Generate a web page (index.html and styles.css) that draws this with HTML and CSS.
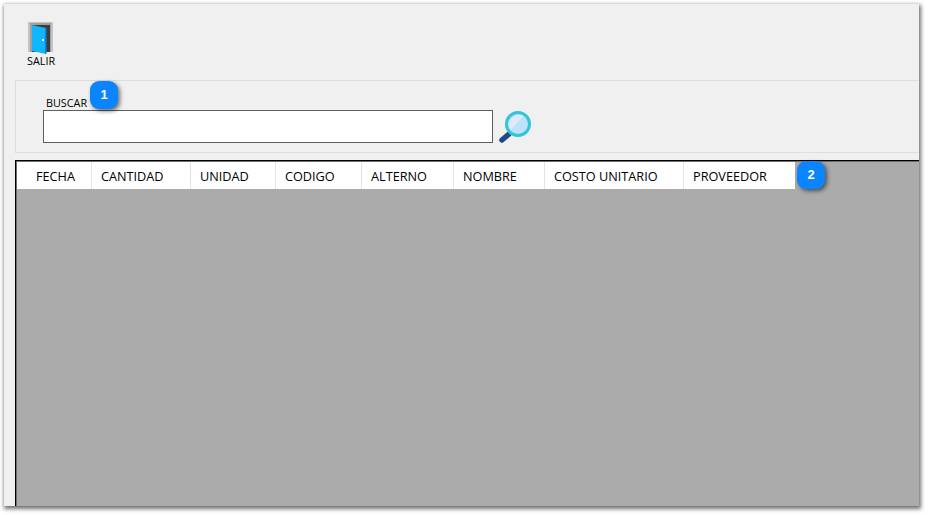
FILE: index.html
```html
<!DOCTYPE html>
<html lang="es">
<head>
<meta charset="utf-8">
<title>Buscar</title>
<link rel="stylesheet" href="styles.css">
</head>
<body>
<div class="window">
  <div class="toolbar">
    <div class="tool">
      <svg class="door" width="25" height="32" viewBox="0 0 25 32">
        <rect x="0" y="0" width="25" height="30" fill="#c4c4c4"/>
        <rect x="2" y="1" width="21" height="29" fill="#a0a0a0"/>
        <rect x="4" y="3" width="18" height="27" fill="#3f3b3b"/>
        <path d="M4 3 L18 6 V32 L4 29 Z" fill="#12b4fb"/>
        <path d="M17 5.800 L18.500 6.200 V32 H17 Z" fill="#0a86d8"/>
        <rect x="14" y="17" width="2" height="2" fill="#e8f6ff"/>
      </svg>
      <span class="tool-label">SALIR</span>
    </div>
  </div>
  <div class="search-group">
    <label class="search-label" for="q">BUSCAR</label>
    <div class="search-row">
      <input class="search-input" id="q" type="text">
      <svg class="lens" width="34" height="34" viewBox="0 0 34 34">
        <line x1="11" y1="24" x2="4" y2="30" stroke="#1f4a86" stroke-width="5.500" stroke-linecap="round"/>
        <line x1="11" y1="23" x2="13" y2="21" stroke="#3f6f9f" stroke-width="3"/>
        <circle cx="20" cy="14" r="11.500" fill="#bfe2fb" stroke="#2fc6d6" stroke-width="3"/>
        <path d="M12.500 20 A10 10 0 0 1 25.500 6 Z" fill="#dcebfa"/>
      </svg>
    </div>
    <span class="badge badge-one">1</span>
  </div>
  <div class="grid">
    <div class="grid-head">
      <div class="col col-fecha">FECHA</div>
      <div class="col col-cantidad">CANTIDAD</div>
      <div class="col col-unidad">UNIDAD</div>
      <div class="col col-codigo">CODIGO</div>
      <div class="col col-alterno">ALTERNO</div>
      <div class="col col-nombre">NOMBRE</div>
      <div class="col col-costo">COSTO UNITARIO</div>
      <div class="col col-proveedor">PROVEEDOR</div>
    </div>
    <span class="badge badge-two">2</span>
  </div>
</div>
</body>
</html>
```
FILE: styles.css
```css
* { box-sizing: border-box; }
html, body { margin: 0; height: 100%; background: #fff; overflow: hidden; }
body { padding: 4px 9px 9px 4px; font-family: "Open Sans", "Noto Sans", sans-serif; color: #000; }
.window {
  position: relative;
  width: 915px;
  height: 502px;
  background: #f0f0f0;
  display: flex;
  flex-direction: column;
  padding: 18px 0 0 11px;
  box-shadow: 1px 2px 4px 1px rgba(0,0,0,.55), 0 0 3px rgba(0,0,0,.06);
}
.toolbar { height: 58px; flex: none; padding-left: 12px; }
.tool { display: inline-flex; flex-direction: column; width: 30px; align-items: flex-start; }
.door { display: block; margin-left: 1px; }
.tool-label { font-size: 10.800px; line-height: 14px; white-space: nowrap; }
.search-group {
  position: relative;
  flex: none;
  height: 73px;
  border: 1px solid #dedede;
  border-right: 0;
  padding: 14px 0 0 27px;
  display: flex;
  flex-direction: column;
}
.search-label { font-size: 10.800px; line-height: 15px; margin-left: 3px; }
.search-row { display: flex; align-items: flex-start; gap: 5px; }
.search-input {
  width: 450px;
  height: 33px;
  border: 1px solid #5f5f5f;
  background: #fff;
  padding: 0;
  margin: 0;
}
.lens { display: block; flex: none; }
.grid {
  position: relative;
  flex: 1;
  margin-top: 7px;
  background: #ababab;
  border-left: 1px solid #000;
  border-top: 1px solid #000;
  box-shadow: inset 1px 1px 0 #6e6e6e;
}
.grid-head { display: flex; width: 778px; height: 27px; margin: 1px 0 0 1px; background: #fff; }
.col {
  font-size: 12.700px;
  line-height: 29px;
  height: 27px;
  padding-left: 9px;
  border-right: 1px solid #e3e3e3;
  white-space: nowrap;
}
.col-fecha { width: 75px; padding-left: 19px; }
.col-cantidad { width: 99px; }
.col-unidad { width: 85px; }
.col-codigo { width: 86px; }
.col-alterno { width: 92px; }
.col-nombre { width: 91px; }
.col-costo { width: 139px; }
.col-proveedor { width: 111px; border-right: 0; }
.badge {
  position: absolute;
  width: 28px;
  height: 28px;
  border-radius: 9px;
  background: #0a84ff;
  color: #fff;
  font-family: "Liberation Sans", Arial, sans-serif;
  font-weight: 700;
  font-size: 13px;
  line-height: 28px;
  text-align: center;
  box-shadow: 2px 2px 4px rgba(0,0,0,.55);
}
.badge-one { left: 74px; top: 0; }
.badge-two { left: 781px; top: 0; }
```
